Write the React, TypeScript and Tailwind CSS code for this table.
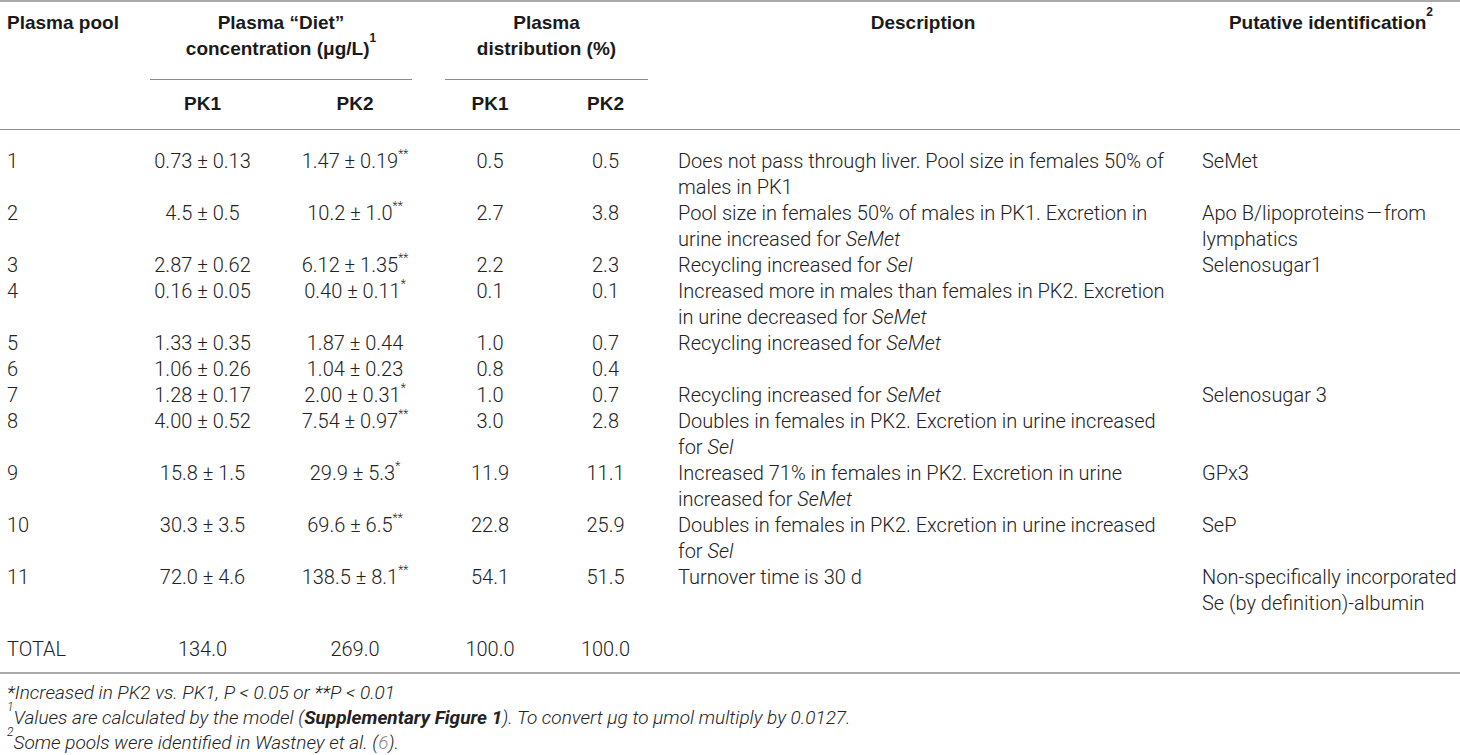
import type { ReactNode } from 'react';

type Row = {
  pool: string;
  c1: ReactNode;
  c2: ReactNode;
  d1: string;
  d2: string;
  desc: ReactNode;
  id: ReactNode;
};

const Star = ({ n }: { n: string }) => (
  <sup className="text-[12px] align-[4px] leading-none">{n}</sup>
);

const rows: Row[] = [
  {
    pool: '1',
    c1: '0.73 ± 0.13',
    c2: <>1.47 ± 0.19<Star n="**" /></>,
    d1: '0.5',
    d2: '0.5',
    desc: 'Does not pass through liver. Pool size in females 50% of males in PK1',
    id: 'SeMet',
  },
  {
    pool: '2',
    c1: '4.5 ± 0.5',
    c2: <>10.2 ± 1.0<Star n="**" /></>,
    d1: '2.7',
    d2: '3.8',
    desc: <>Pool size in females 50% of males in PK1. Excretion in urine increased for <i>SeMet</i></>,
    id: 'Apo B/lipoproteins\u200a—\u200afrom lymphatics',
  },
  {
    pool: '3',
    c1: '2.87 ± 0.62',
    c2: <>6.12 ± 1.35<Star n="**" /></>,
    d1: '2.2',
    d2: '2.3',
    desc: <>Recycling increased for <i>Sel</i></>,
    id: 'Selenosugar1',
  },
  {
    pool: '4',
    c1: '0.16 ± 0.05',
    c2: <>0.40 ± 0.11<Star n="*" /></>,
    d1: '0.1',
    d2: '0.1',
    desc: <>Increased more in males than females in PK2. Excretion in urine decreased for <i>SeMet</i></>,
    id: '',
  },
  {
    pool: '5',
    c1: '1.33 ± 0.35',
    c2: '1.87 ± 0.44',
    d1: '1.0',
    d2: '0.7',
    desc: <>Recycling increased for <i>SeMet</i></>,
    id: '',
  },
  {
    pool: '6',
    c1: '1.06 ± 0.26',
    c2: '1.04 ± 0.23',
    d1: '0.8',
    d2: '0.4',
    desc: '',
    id: '',
  },
  {
    pool: '7',
    c1: '1.28 ± 0.17',
    c2: <>2.00 ± 0.31<Star n="*" /></>,
    d1: '1.0',
    d2: '0.7',
    desc: <>Recycling increased for <i>SeMet</i></>,
    id: 'Selenosugar 3',
  },
  {
    pool: '8',
    c1: '4.00 ± 0.52',
    c2: <>7.54 ± 0.97<Star n="**" /></>,
    d1: '3.0',
    d2: '2.8',
    desc: <>Doubles in females in PK2. Excretion in urine increased for <i>Sel</i></>,
    id: '',
  },
  {
    pool: '9',
    c1: '15.8 ± 1.5',
    c2: <>29.9 ± 5.3<Star n="*" /></>,
    d1: '11.9',
    d2: '11.1',
    desc: <>Increased 71% in females in PK2. Excretion in urine increased for <i>SeMet</i></>,
    id: 'GPx3',
  },
  {
    pool: '10',
    c1: '30.3 ± 3.5',
    c2: <>69.6 ± 6.5<Star n="**" /></>,
    d1: '22.8',
    d2: '25.9',
    desc: <>Doubles in females in PK2. Excretion in urine increased for <i>Sel</i></>,
    id: 'SeP',
  },
  {
    pool: '11',
    c1: '72.0 ± 4.6',
    c2: <>138.5 ± 8.1<Star n="**" /></>,
    d1: '54.1',
    d2: '51.5',
    desc: 'Turnover time is 30 d',
    id: 'Non-specifically incorporated Se (by definition)-albumin',
  },
];

export default function App() {
  return (
    <div className="w-[1460px] h-[755px] overflow-hidden bg-white text-[#222] font-['Roboto','Liberation_Sans',sans-serif]">
      <table className="w-full table-fixed border-collapse border-t-2 border-[#a9a9a9]">
        <colgroup>
          <col className="w-[140px]" />
          <col className="w-[125px]" />
          <col className="w-[180px]" />
          <col className="w-[90px]" />
          <col className="w-[141px]" />
          <col className="w-[514px]" />
          <col className="w-[270px]" />
        </colgroup>
        <thead className="font-['Liberation_Sans',sans-serif] font-bold text-[19px] leading-[26px] text-[#1a1a1a]">
          <tr>
            <th rowSpan={2} className="pl-[7px] pt-[8px] text-left align-top font-bold">
              Plasma pool
            </th>
            <th colSpan={2} className="pt-[8px] pl-[10px] pr-[33px] align-top font-bold">
              <div className="border-b border-[#8c8c8c] pb-[17px]">
                Plasma “Diet”
                <br />
                concentration (μg/L)<sup className="text-[12px] align-[7px] leading-none">1</sup>
              </div>
            </th>
            <th colSpan={2} className="pt-[8px] pl-0 pr-[28px] align-top font-bold">
              <div className="border-b border-[#8c8c8c] pb-[17px]">
                Plasma
                <br />
                distribution (%)
              </div>
            </th>
            <th rowSpan={2} className="pt-[8px] pr-[20px] align-top font-bold">
              Description
            </th>
            <th rowSpan={2} className="pt-[8px] pl-[12px] align-top font-bold">
              Putative identification<sup className="text-[12px] align-[7px] leading-none">2</sup>
            </th>
          </tr>
          <tr className="border-b border-[#8c8c8c]">
            <th className="pt-[11px] pb-[12px] font-bold">PK1</th>
            <th className="pt-[11px] pb-[12px] font-bold">PK2</th>
            <th className="pt-[11px] pb-[12px] font-bold">PK1</th>
            <th className="pt-[11px] pb-[12px] font-bold">PK2</th>
          </tr>
        </thead>
        <tbody className="font-light text-[20px] leading-[26px]">
          {rows.map((r, i) => (
            <tr key={r.pool} className="align-top">
              <td className={`pl-[7px] ${i === 0 ? 'pt-[18px]' : ''}`}>{r.pool}</td>
              <td className={`text-center ${i === 0 ? 'pt-[18px]' : ''}`}>{r.c1}</td>
              <td className={`text-center ${i === 0 ? 'pt-[18px]' : ''}`}>{r.c2}</td>
              <td className={`text-center ${i === 0 ? 'pt-[18px]' : ''}`}>{r.d1}</td>
              <td className={`text-center ${i === 0 ? 'pt-[18px]' : ''}`}>{r.d2}</td>
              <td className={`pl-[2px] pr-[22px] ${i === 0 ? 'pt-[18px]' : ''}`}>{r.desc}</td>
              <td className={`pl-[12px] ${i === 0 ? 'pt-[18px]' : ''}`}>{r.id}</td>
            </tr>
          ))}
          <tr className="align-top border-b-2 border-[#a9a9a9]">
            <td className="pl-[7px] pt-[20px] pb-[10px]">TOTAL</td>
            <td className="text-center pt-[20px] pb-[10px]">134.0</td>
            <td className="text-center pt-[20px] pb-[10px]">269.0</td>
            <td className="text-center pt-[20px] pb-[10px]">100.0</td>
            <td className="text-center pt-[20px] pb-[10px]">100.0</td>
            <td className="pt-[20px] pb-[10px]" />
            <td className="pt-[20px] pb-[10px]" />
          </tr>
        </tbody>
      </table>
      <div className="pl-[7px] pt-[6px] italic font-light text-[19px] leading-[25px]">
        <p>*Increased in PK2 vs. PK1, P &lt; 0.05 or **P &lt; 0.01</p>
        <p>
          <sup className="text-[12px] align-[7px] leading-none">1</sup>Values are calculated by the model (
          <b className="font-bold">Supplementary Figure 1</b>). To convert μg to μmol multiply by 0.0127.
        </p>
        <p>
          <sup className="text-[12px] align-[7px] leading-none">2</sup>Some pools were identified in Wastney et al. (
          <span className="text-[#8a8a8a]">6</span>).
        </p>
      </div>
    </div>
  );
}
